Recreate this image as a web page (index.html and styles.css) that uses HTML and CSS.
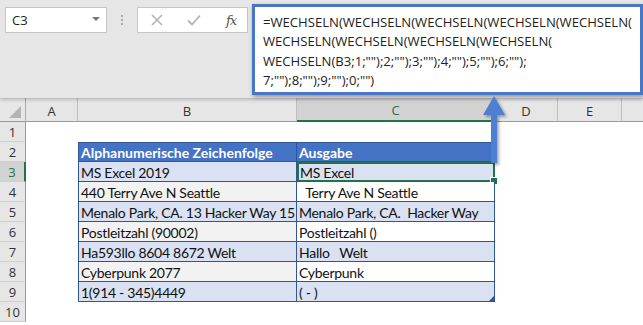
FILE: index.html
```html
<!DOCTYPE html>
<html lang="de">
<head>
<meta charset="utf-8">
<title>WECHSELN</title>
<link rel="stylesheet" href="styles.css">
</head>
<body>
<div class="app">
  <div class="toolbar">
    <div class="namebox"><span class="nb-text">C3</span><span class="nb-caret"></span></div>
    <div class="dots"><i></i><i></i><i></i></div>
    <div class="fbtns">
      <svg class="ico" width="14" height="14" viewBox="0 0 14 14"><path d="M2 2 L12 12 M12 2 L2 12" stroke="#b4b4b4" stroke-width="1.6" fill="none"/></svg>
      <svg class="ico" width="16" height="14" viewBox="0 0 16 14"><path d="M2 7.5 L6 11.5 L14 2.5" stroke="#b4b4b4" stroke-width="1.8" fill="none"/></svg>
      <span class="fx">fx</span>
    </div>
    <div class="formula">=WECHSELN(WECHSELN(WECHSELN(WECHSELN(WECHSELN(<br>WECHSELN(WECHSELN(WECHSELN(WECHSELN(<br>WECHSELN(B3;1;"");2;"");3;"");4;"");5;"");6;"");<br>7;"");8;"");9;"");0;"")</div>
  </div>

  <div class="sheet">
    <div class="corner"><span class="tri"></span></div>
    <div class="ch">A</div>
    <div class="ch">B</div>
    <div class="ch ch-sel">C</div>
    <div class="ch">D</div>
    <div class="ch">E</div>
    <div class="ch ch-last"></div>

    <div class="rh">1</div><div class="c"></div><div class="c"></div><div class="c"></div><div class="c"></div><div class="c"></div><div class="c"></div>

    <div class="rh">2</div><div class="c"></div>
    <div class="t tb th">Alphanumerische Zeichenfolge</div><div class="t tc th">Ausgabe</div>
    <div class="c"></div><div class="c"></div><div class="c"></div>

    <div class="rh rh-sel">3</div><div class="c"></div>
    <div class="t tb odd">MS Excel 2019</div><div class="t tc odd sel">MS Excel<span class="handle"></span></div>
    <div class="c"></div><div class="c"></div><div class="c"></div>

    <div class="rh">4</div><div class="c"></div>
    <div class="t tb even">440 Terry Ave N Seattle</div><div class="t tc">  Terry Ave N Seattle</div>
    <div class="c"></div><div class="c"></div><div class="c"></div>

    <div class="rh">5</div><div class="c"></div>
    <div class="t tb odd">Menalo Park, CA. 13 Hacker Way 15</div><div class="t tc odd">Menalo Park, CA.  Hacker Way </div>
    <div class="c"></div><div class="c"></div><div class="c"></div>

    <div class="rh">6</div><div class="c"></div>
    <div class="t tb even">Postleitzahl (90002)</div><div class="t tc">Postleitzahl ()</div>
    <div class="c"></div><div class="c"></div><div class="c"></div>

    <div class="rh">7</div><div class="c"></div>
    <div class="t tb odd">Ha593llo 8604 8672 Welt</div><div class="t tc odd">Hallo   Welt</div>
    <div class="c"></div><div class="c"></div><div class="c"></div>

    <div class="rh">8</div><div class="c"></div>
    <div class="t tb even">Cyberpunk 2077</div><div class="t tc">Cyberpunk </div>
    <div class="c"></div><div class="c"></div><div class="c"></div>

    <div class="rh">9</div><div class="c"></div>
    <div class="t tb odd">1(914 - 345)4449</div><div class="t tc odd last">( - )<span class="resize"></span></div>
    <div class="c"></div><div class="c"></div><div class="c"></div>

    <div class="rh">10</div><div class="c"></div><div class="c"></div><div class="c"></div><div class="c"></div><div class="c"></div><div class="c"></div>
  </div>

  <svg class="arrow" width="30" height="76" viewBox="0 0 30 76">
    <defs>
      <filter id="sh" x="-50%" y="-20%" width="200%" height="140%">
        <feDropShadow dx="2" dy="2" stdDeviation="1.5" flood-color="#000" flood-opacity="0.35"/>
      </filter>
    </defs>
    <path d="M14 2 L25 21 L17 21 L17 69 L11 69 L11 21 L3 21 Z" fill="#4d7fd3" filter="url(#sh)"/>
  </svg>
</div>
</body>
</html>
```

FILE: styles.css
```css
* { box-sizing: border-box; }
html, body { margin: 0; padding: 0; }
body {
  width: 643px;
  height: 325px;
  overflow: hidden;
  background: #ffffff;
  font-family: "Lato", "Open Sans", sans-serif;
}
.app { position: relative; width: 643px; height: 325px; }

.toolbar {
  position: relative;
  z-index: 2;
  height: 98px;
  background: #e6e6e6;
  display: flex;
  align-items: flex-start;
  padding: 7px 0 0 5px;
  box-shadow: 0 1px 4px rgba(0,0,0,0.28);
}
.namebox {
  width: 102px;
  height: 26px;
  background: #fff;
  border: 1px solid #c6c6c6;
  display: flex;
  align-items: center;
  justify-content: space-between;
  padding: 0 6px 0 6px;
  font-family: "Open Sans", sans-serif;
  font-size: 13px;
  color: #222;
}
.nb-caret {
  width: 0; height: 0;
  border-left: 4px solid transparent;
  border-right: 4px solid transparent;
  border-top: 4px solid #777;
  margin-top: -3px;
}
.dots {
  width: 30px;
  height: 26px;
  display: flex;
  flex-direction: column;
  align-items: center;
  justify-content: center;
  gap: 2px;
}
.dots i { display: block; width: 2px; height: 2px; background: #a8a8a8; }
.fbtns {
  width: 111px;
  height: 26px;
  background: #fff;
  border: 1px solid #c6c6c6;
  display: flex;
  align-items: center;
  padding: 0 0 0 12px;
  gap: 22px;
}
.fbtns .ico { display: block; }
.fx {
  font-family: "DejaVu Serif", serif;
  font-style: italic;
  font-size: 13px;
  color: #555;
  letter-spacing: -1px;
  margin-left: 2px;
}
.formula {
  margin: -3px 0 0 4px;
  width: 391px;
  height: 91px;
  background: #fff;
  border: 3px solid #4a76c6;
  box-shadow: 1px 2px 4px rgba(0,0,0,0.35);
  padding: 6px 8px 0 8px;
  font-family: "Open Sans", sans-serif;
  font-size: 13.1px;
  line-height: 19.3px;
  color: #222;
  white-space: nowrap;
}

.sheet {
  display: grid;
  grid-template-columns: 26px 52px 219px 198px 63px 64px 21px;
  grid-template-rows: 24px repeat(10, 20px);
  font-size: 14px;
}
.corner {
  background: #e6e6e6;
  border-right: 1px solid #ababab;
  border-bottom: 1px solid #9a9a9a;
  position: relative;
}
.tri {
  position: absolute;
  right: 4px;
  bottom: 3px;
  width: 0; height: 0;
  border-left: 12px solid transparent;
  border-bottom: 12px solid #b4b4b4;
}
.ch {
  background: #e6e6e6;
  border-right: 1px solid #bdbdbd;
  border-bottom: 1px solid #9a9a9a;
  display: flex;
  align-items: center;
  justify-content: center;
  padding-top: 2px;
  font-family: "Open Sans", sans-serif;
  font-size: 13px;
  color: #333;
}
.ch-last { border-right: none; }
.ch-sel {
  background: #d2d2d2;
  color: #217346;
  border-bottom: 2px solid #217346;
}
.rh {
  background: #e6e6e6;
  border-right: 1px solid #9a9a9a;
  border-bottom: 1px solid #cfcfcf;
  display: flex;
  align-items: center;
  justify-content: center;
  font-family: "Open Sans", sans-serif;
  font-size: 13px;
  color: #333;
}
.rh-sel {
  background: #d2d2d2;
  color: #217346;
  border-right: 2px solid #217346;
}
.c { background: #fff; }
.t {
  position: relative;
  border-bottom: 1px solid #2f5597;
  border-right: 1px solid #2f5597;
  display: flex;
  align-items: center;
  padding: 1px 0 0 2px;
  white-space: pre;
  color: #111;
  background: #fff;
  letter-spacing: -0.28px;
}
.tb { border-left: 1px solid #2f5597; }
.th {
  background: #4472c4;
  color: #fff;
  font-weight: bold;
  border-top: 1px solid #2f5597;
  letter-spacing: 0;
}
.odd { background: #d9e1f2; }
.even { background: #f2f2f2; }
.sel {
  border: 2px solid #217346;
  padding-left: 1px;
}
.handle {
  position: absolute;
  right: -4px;
  bottom: -4px;
  width: 6px;
  height: 6px;
  background: #217346;
  outline: 1px solid #fff;
}
.resize {
  position: absolute;
  right: 0;
  bottom: 0;
  width: 0; height: 0;
  border-left: 5px solid transparent;
  border-bottom: 5px solid #2f5597;
}
.arrow {
  position: absolute;
  left: 480px;
  top: 94px;
  z-index: 3;
}
```
